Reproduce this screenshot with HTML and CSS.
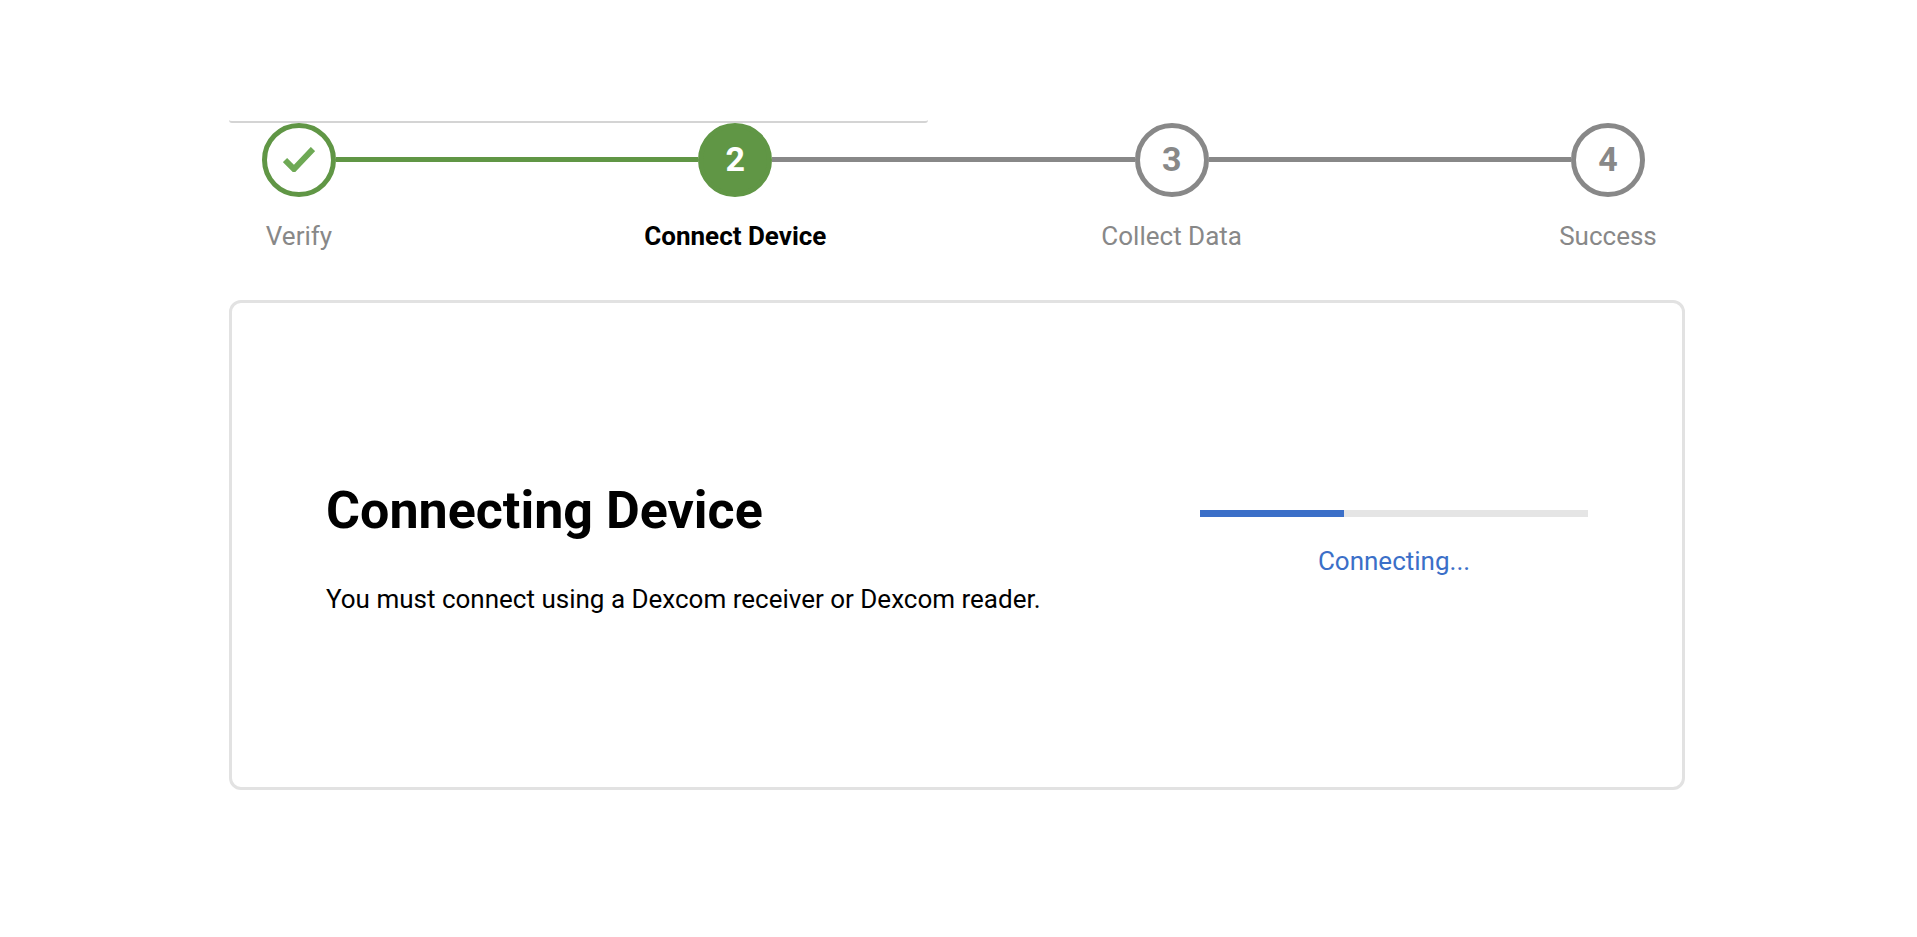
FILE: index.html
```html
<!DOCTYPE html>
<html lang="en">
	<head>
		<meta charset="utf-8">
		<title>Connect Device</title>
		<link rel="stylesheet" href="styles.css">
	</head>
	<body>
		<main class="wizard">
			<div class="sheet-edge"></div>
			<ol class="steps">
				<li class="step done">
					<span class="circle">
						<svg class="check" viewBox="0 0 32 25" aria-hidden="true"><path d="M2 13l9 9L30 2"/></svg>
					</span>
					<span class="label">Verify</span>
				</li>
				<li class="line done" aria-hidden="true"></li>
				<li class="step active" aria-current="step">
					<span class="circle">2</span>
					<span class="label">Connect Device</span>
				</li>
				<li class="line" aria-hidden="true"></li>
				<li class="step">
					<span class="circle">3</span>
					<span class="label">Collect Data</span>
				</li>
				<li class="line" aria-hidden="true"></li>
				<li class="step">
					<span class="circle">4</span>
					<span class="label">Success</span>
				</li>
			</ol>
			<section class="card">
				<div class="message">
					<h1>Connecting Device</h1>
					<p>You must connect using a Dexcom receiver or Dexcom reader.</p>
				</div>
				<div class="status">
					<progress id="connect" value="37" max="100"></progress>
					<label for="connect">Connecting...</label>
				</div>
			</section>
		</main>
	</body>
</html>
```
FILE: styles.css
```css
*{
	box-sizing:border-box;
}
body{
	margin:0;
	background-color:white;
	color:black;
	font-family:Roboto, "Liberation Sans", sans-serif;
	font-size:26px;
	line-height:32px;
}
.wizard{
	padding:120px 232px 120px 229px;
}
/* lower edge of the panel above the steps */
.sheet-edge{
	width:48%;
	height:3px;
	border-bottom:2px solid #d4d4d4;
	border-radius:0 0 8px 8px;
}
.steps{
	display:flex;
	align-items:flex-start;
	list-style:none;
	margin:0;
	padding:0 40px 0 33px;
}
.step{
	display:flex;
	flex-direction:column;
	align-items:center;
	gap:23px;
	width:74px;
	color:#888;
}
.circle{
	display:flex;
	align-items:center;
	justify-content:center;
	width:74px;
	height:74px;
	padding-bottom:2px;
	border:5px solid #888;
	border-radius:50%;
	font-size:34px;
	font-weight:700;
}
.label{
	white-space:nowrap;
}
.done .circle{
	border-color:#609645;
}
.active .circle{
	border-color:#609645;
	background-color:#609645;
	color:white;
}
.active .label{
	color:black;
	font-weight:700;
}
.check{
	width:32px;
	height:25px;
	fill:none;
	stroke:#6ea955;
	stroke-width:6;
}
.line{
	flex:1;
	height:5px;
	margin-top:34px;
	background-color:#888;
}
.line.done{
	background-color:#609645;
}
.card{
	display:flex;
	align-items:flex-start;
	justify-content:space-between;
	min-height:490px;
	margin-top:48px;
	padding:176px 94px 160px;
	border:3px solid #e2e2e2;
	border-radius:12px;
}
h1{
	margin:0;
	font-size:52px;
	line-height:64px;
}
p{
	margin:40px 0 0;
}
.status{
	display:flex;
	flex-direction:column;
	gap:28px;
	width:388px;
	padding-top:31px;
	color:#3b6fc8;
	text-align:center;
}
progress{
	display:block;
	width:100%;
	height:7px;
	border:0;
	appearance:none;
	background-color:#e5e5e5;
}
progress::-webkit-progress-bar{
	background-color:#e5e5e5;
}
progress::-webkit-progress-value{
	background-color:#3b6fc8;
}
```
